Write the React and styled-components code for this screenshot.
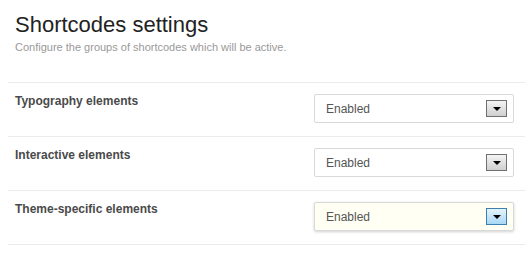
import React from "react";
import styled, { createGlobalStyle } from "styled-components";

const GlobalStyle = createGlobalStyle`
  body {
    margin: 0;
    background: #fff;
    font-family: "Liberation Sans", Arial, sans-serif;
  }
`;

const groups = [
    { id: "typography", label: "Typography elements", value: "Enabled" },
    { id: "interactive", label: "Interactive elements", value: "Enabled" },
    { id: "theme", label: "Theme-specific elements", value: "Enabled", focused: true }
];

export default function App() {
    return (
        <Page>
            <GlobalStyle />
            <Header>
                <Title>Shortcodes settings</Title>
                <Subtitle>Configure the groups of shortcodes which will be active.</Subtitle>
            </Header>
            <List>
                {groups.map(group => (
                    <Row key={group.id}>
                        <Label>{group.label}</Label>
                        <Select $focused={group.focused}>
                            <SelectValue>{group.value}</SelectValue>
                            <ArrowButton $focused={group.focused}>
                                <Triangle />
                            </ArrowButton>
                        </Select>
                    </Row>
                ))}
            </List>
        </Page>
    );
}

const Page = styled.main`
  width: 525px;
  height: 254px;
  overflow: hidden;
`

const Header = styled.header`
  padding: 12px 0 0 15px;
  margin-bottom: 28px;
`

const Title = styled.h1`
  margin: 0;
  font-size: 22px;
  line-height: 26px;
  font-weight: normal;
  color: #222;
`

const Subtitle = styled.p`
  margin: 2px 0 0;
  font-size: 11px;
  line-height: 14px;
  color: #999;
`

const List = styled.div`
  margin-left: 8px;
  border-top: 1px solid #ebebeb;
`

const Row = styled.div`
  display: flex;
  justify-content: space-between;
  align-items: flex-start;
  height: 54px;
  padding: 11px 11px 0 7px;
  box-sizing: border-box;
  border-bottom: 1px solid #ebebeb;
`

const Label = styled.span`
  font-size: 12px;
  font-weight: bold;
  color: #4a4a4a;
`

const Select = styled.div`
  display: flex;
  align-items: center;
  justify-content: space-between;
  width: 200px;
  height: 29px;
  box-sizing: border-box;
  padding: 0 6px 0 11px;
  border: 1px solid #d9d9d9;
  border-radius: 2px;
  background: ${p => (p.$focused ? "#fffff4" : "#fff")};
  box-shadow: ${p => (p.$focused ? "0 1px 3px rgba(0,0,0,0.18)" : "none")};
`

const SelectValue = styled.span`
  font-size: 12px;
  color: #555;
`

const ArrowButton = styled.span`
  display: flex;
  align-items: center;
  justify-content: center;
  width: 21px;
  height: 17px;
  box-sizing: border-box;
  border: 1px solid ${p => (p.$focused ? "#3c7fb1" : "#707070")};
  background: ${p => (p.$focused
        ? "linear-gradient(#e5f4fc, #a8d8f5)"
        : "linear-gradient(#f4f4f4, #cfcfcf)")};
`

const Triangle = styled.span`
  width: 0;
  height: 0;
  border-left: 4px solid transparent;
  border-right: 4px solid transparent;
  border-top: 4px solid #000;
`
